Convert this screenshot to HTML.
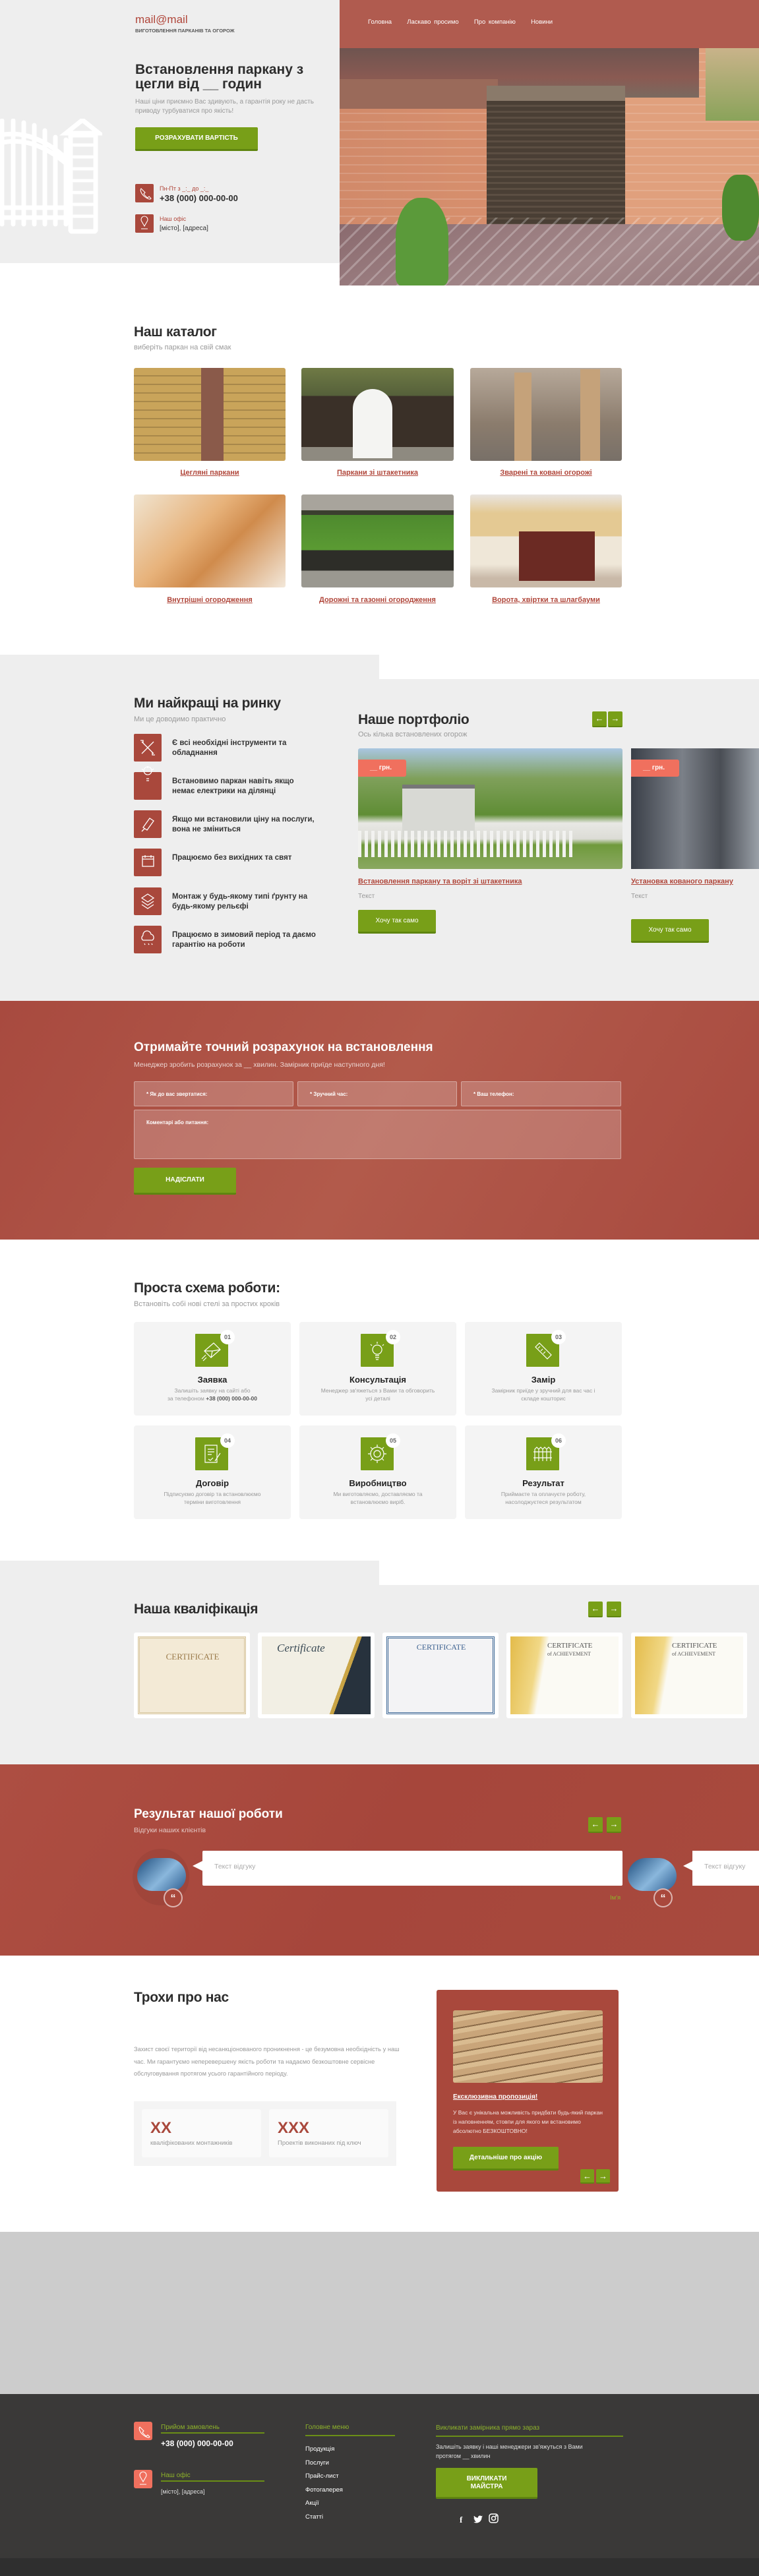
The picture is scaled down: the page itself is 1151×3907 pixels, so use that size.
<!DOCTYPE html>
<html><head><meta charset="utf-8"><style>
*{margin:0;padding:0;box-sizing:border-box}
body{width:1151px;height:3907px;position:relative;font-family:"Liberation Sans",sans-serif;background:#fff;overflow:hidden;color:#333}
.a{position:absolute}
.h2{font-size:21px;font-weight:bold;color:#2d2d2d;letter-spacing:-.3px}
.sub{font-size:11px;color:#999}
.btn{background:#789f18;color:#fff;font-weight:bold;text-align:center;border-bottom:3px solid #5f8510;border-radius:2px}
.arr{width:22px;height:24px;background:#789f18;border-radius:2px;color:#fff;font-size:13px;text-align:center;line-height:22px;border-bottom:2px solid #5f8510}
.lnk{color:#b0463a;font-weight:bold;font-size:11px;text-decoration:underline;text-align:center}
.ic{width:42px;height:42px;background:#a9483c;border-radius:2px}
.feat{font-size:11.5px;font-weight:bold;color:#333;line-height:15px}
.inp{background:rgba(255,255,255,.2);border:1px solid rgba(255,255,255,.35);border-radius:2px;color:#fff;font-size:8px;font-weight:bold;padding:14px 0 0 18px}
.card{background:#f4f4f4;border-radius:4px;text-align:center}
.card .gi{position:absolute;left:93px;top:18px;width:50px;height:50px;background:#789f18;border-radius:1px}
.card .gi svg{position:absolute;left:0;top:0}
.card .n{position:absolute;left:131px;top:12px;width:22px;height:22px;border-radius:50%;background:#fff;font-size:9px;line-height:22px;color:#666;font-weight:bold}
.card .t{position:absolute;left:0;right:0;top:80px;font-weight:bold;font-size:13px;color:#222}
.card .d{position:absolute;left:10px;right:10px;top:98px;font-size:8.5px;color:#999;line-height:12px}
.cert{background:#fff;border-radius:3px;padding:6px}
.cert div{width:100%;height:100%}
</style></head><body>

<!-- HERO -->
<div class="a" style="left:0;top:0;width:516px;height:399px;background:#eeeeee"></div>
<svg class="a" style="left:0;top:180px" width="155" height="176" viewBox="0 0 155 176">
<g fill="none" stroke="#fff" stroke-width="7" stroke-linecap="round">
<path d="M3 3V160M20 3V160M36 6V160M52 10V160M68 18V160M84 28V160M100 32V160"/>
<path d="M0 25Q50 15 100 60M0 37Q50 25 100 68"/>
<path d="M0 135H100M0 150H100"/>
<rect x="107" y="25" width="38" height="146" rx="2"/>
<path d="M100 22L125 2L150 22Z"/>
<path d="M112 40H140M112 58H140M112 76H140M112 94H140M112 112H140M112 130H140M112 148H140" stroke-width="5"/>
</g></svg>
<div class="a" style="left:205px;top:20px;font-size:17px;color:#b0463a">mail@mail</div>
<div class="a" style="left:205px;top:42px;font-size:7.5px;color:#555;font-weight:bold">ВИГОТОВЛЕННЯ ПАРКАНІВ ТА ОГОРОЖ</div>
<div class="a" style="left:205px;top:95px;width:310px;font-size:21px;font-weight:bold;color:#2d2d2d;line-height:22px">Встановлення паркану з цегли від __ годин</div>
<div class="a" style="left:205px;top:148px;width:290px;font-size:10px;color:#999;line-height:14px">Наші ціни приємно Вас здивують, а гарантія року не дасть приводу турбуватися про якість!</div>
<div class="a btn" style="left:205px;top:193px;width:186px;height:36px;font-size:10px;line-height:34px">РОЗРАХУВАТИ ВАРТІСТЬ</div>
<div class="a ic" style="left:205px;top:279px;width:28px;height:28px"></div>
<div class="a" style="left:242px;top:281px;font-size:9px;color:#b0463a">Пн-Пт з _:_ до _:_</div>
<div class="a" style="left:242px;top:293px;font-size:13px;font-weight:bold;color:#2d2d2d">+38 (000) 000-00-00</div>
<div class="a ic" style="left:205px;top:325px;width:28px;height:28px"></div>
<div class="a" style="left:242px;top:327px;font-size:9px;color:#b0463a">Наш офіс</div>
<div class="a" style="left:242px;top:341px;font-size:10px;color:#333">[місто], [адреса]</div>
<svg class="a" style="left:205px;top:279px" width="28" height="74" fill="none" stroke="#fff" stroke-width="1.1">
<path d="M9 7c-2 2 0 8 5 12s9 5 10 3l-3-3-2 2c-2-1-5-4-6-6l2-2z"/>
<path d="M14 64l-4-7a5 5 0 1 1 8 0zM9 68h10"/>
</svg>

<div class="a" style="left:515px;top:0;width:636px;height:74px;background:#b05b4f"></div>
<div class="a" style="left:558px;top:28px;font-size:9.5px;color:#fff;word-spacing:2px">Головна &nbsp;&nbsp;&nbsp; Ласкаво просимо &nbsp;&nbsp;&nbsp; Про компанію &nbsp;&nbsp;&nbsp; Новини</div>
<div class="a" style="left:515px;top:73px;width:636px;height:360px;background:linear-gradient(90deg,#d18a6a 0,#d8906e 45%,#e0a07d 45%)"></div>
<div class="a" style="left:515px;top:73px;width:636px;height:360px;background:repeating-linear-gradient(0deg,rgba(255,255,255,.14) 0 2px,transparent 2px 13px)"></div>
<div class="a" style="left:515px;top:73px;width:545px;height:75px;background:linear-gradient(180deg,#6e5450,#8a5a52 60%,#7a6a60)"></div>
<div class="a" style="left:515px;top:120px;width:240px;height:45px;background:#9a6a5a"></div>
<div class="a" style="left:1070px;top:73px;width:81px;height:110px;background:linear-gradient(180deg,#c9b38a,#8aa35a)"></div>
<div class="a" style="left:738px;top:130px;width:210px;height:25px;background:#8a7a6a"></div>
<div class="a" style="left:738px;top:153px;width:210px;height:195px;background:repeating-linear-gradient(180deg,#4a3f35 0 6px,#5b4e42 6px 9px)"></div>
<div class="a" style="left:515px;top:340px;width:636px;height:93px;background:linear-gradient(160deg,#8a6a6e,#a58a8c 60%,#96797c)"></div>
<div class="a" style="left:515px;top:330px;width:636px;height:103px;background:repeating-linear-gradient(135deg,transparent 0 14px,rgba(255,255,255,.25) 14px 17px)"></div>
<div class="a" style="left:600px;top:300px;width:80px;height:133px;border-radius:45% 45% 10% 10%;background:#5b9a3a"></div>
<div class="a" style="left:1095px;top:265px;width:56px;height:100px;border-radius:40%;background:#4e8a2f"></div>

<!-- CATALOG -->
<div class="a h2" style="left:203px;top:492px">Наш каталог</div>
<div class="a sub" style="left:203px;top:521px">виберіть паркан на свій смак</div>
<div class="a" style="left:203px;top:558px;width:230px;height:141px;border-radius:3px;background:repeating-linear-gradient(0deg,#c9a45a 0 11px,#a8884a 11px 13px),#c9a45a"></div>
<div class="a" style="left:305px;top:558px;width:34px;height:141px;background:#8a5a4a"></div>
<div class="a" style="left:457px;top:558px;width:231px;height:141px;border-radius:3px;background:linear-gradient(180deg,#6f7a45 0,#55603a 30%,#3a3028 30%,#3a3028 85%,#8e8a80 85%)"></div>
<div class="a" style="left:535px;top:590px;width:60px;height:105px;border-radius:30px 30px 0 0;background:#f4f4f2"></div>
<div class="a" style="left:713px;top:558px;width:230px;height:141px;border-radius:3px;background:linear-gradient(180deg,#b7a99a,#8b7c6d 60%,#787068)"></div>
<div class="a" style="left:780px;top:565px;width:26px;height:134px;background:#c5a27a"></div>
<div class="a" style="left:880px;top:560px;width:30px;height:139px;background:#c5a27a"></div>
<div class="a lnk" style="left:203px;top:711px;width:230px">Цегляні паркани</div>
<div class="a lnk" style="left:457px;top:711px;width:231px">Паркани зі штакетника</div>
<div class="a lnk" style="left:713px;top:711px;width:230px">Зварені та ковані огорожі</div>
<div class="a" style="left:203px;top:750px;width:230px;height:141px;border-radius:3px;background:linear-gradient(135deg,#f0e4d0 0,#e7b27a 40%,#d08b4c 60%,#f3e8da 100%)"></div>
<div class="a" style="left:457px;top:750px;width:231px;height:141px;border-radius:3px;background:linear-gradient(180deg,#a8a49c 0,#a8a49c 17%,#3b3f2f 17%,#3b3f2f 22%,#4e8a2e 22%,#5b9b33 60%,#2d2d28 60%,#2d2d28 82%,#9a9890 82%)"></div>
<div class="a" style="left:713px;top:750px;width:230px;height:141px;border-radius:3px;background:linear-gradient(180deg,#e9e5e0 0,#e4c993 20%,#e4c993 45%,#efe7d8 45%,#efe7d8 75%,#c9b9a8 90%)"></div>
<div class="a" style="left:787px;top:806px;width:115px;height:75px;background:#6b2a23"></div>
<div class="a lnk" style="left:203px;top:904px;width:230px">Внутрішні огородження</div>
<div class="a lnk" style="left:457px;top:904px;width:231px">Дорожні та газонні огородження</div>
<div class="a lnk" style="left:713px;top:904px;width:230px">Ворота, хвіртки та шлагбауми</div>

<!-- BEST / PORTFOLIO -->
<div class="a" style="left:0;top:993px;width:575px;height:40px;background:#eeeeee"></div>
<div class="a" style="left:0;top:1030px;width:1151px;height:488px;background:#eeeeee"></div>
<div class="a h2" style="left:203px;top:1055px">Ми найкращі на ринку</div>
<div class="a sub" style="left:203px;top:1085px">Ми це доводимо практично</div>
<div class="a ic" style="left:203px;top:1113px"></div>
<div class="a feat" style="left:261px;top:1120px">Є всі необхідні інструменти та<br>обладнання</div>
<div class="a ic" style="left:203px;top:1171px"></div>
<div class="a feat" style="left:261px;top:1178px">Встановимо паркан навіть якщо<br>немає електрики на ділянці</div>
<div class="a ic" style="left:203px;top:1229px"></div>
<div class="a feat" style="left:261px;top:1236px">Якщо ми встановили ціну на послуги,<br>вона не зміниться</div>
<div class="a ic" style="left:203px;top:1287px"></div>
<div class="a feat" style="left:261px;top:1294px">Працюємо без вихідних та свят</div>
<div class="a ic" style="left:203px;top:1346px"></div>
<div class="a feat" style="left:261px;top:1353px">Монтаж у будь-якому типі ґрунту на<br>будь-якому рельєфі</div>
<div class="a ic" style="left:203px;top:1404px"></div>
<div class="a feat" style="left:261px;top:1411px">Працюємо в зимовий період та даємо<br>гарантію на роботи</div>
<svg class="a" style="left:203px;top:1113px" width="42" height="340" fill="none" stroke="#fff" stroke-width="1.3">
<path d="M12 12L30 30M30 12L12 30M10 10l4 0 0 4M32 32l-4 0 0-4"/>
<path d="M21 66a6 6 0 1 1 0.1 0M19 72h4M19 75h4M21 56v-3M14 59l-2-2M28 59l2-2" transform="translate(0,-4)"/>
<path d="M14 142l10-14 6 4-10 14zM12 148l4-4"/>
<rect x="13" y="186" width="17" height="15"/><path d="M13 190h17M17 184v4M26 184v4"/>
<path d="M21 243l9 6-9 6-9-6zM12 254l9 6 9-6M12 259l9 6 9-6"/>
<path d="M14 306a6 6 0 0 1 12-2a5 5 0 0 1 2 9h-14a4 4 0 0 1 0-7M16 318l1 2M22 318l1 2M27 318l1 2"/>
</svg>

<div class="a h2" style="left:543px;top:1080px">Наше портфоліо</div>
<div class="a sub" style="left:543px;top:1108px">Ось кілька встановлених огорож</div>
<div class="a arr" style="left:898px;top:1079px">&larr;</div>
<div class="a arr" style="left:922px;top:1079px">&rarr;</div>
<div class="a" style="left:543px;top:1135px;width:401px;height:183px;border-radius:3px;background:linear-gradient(180deg,#a9c6e0 0,#7fa05a 25%,#5f8d35 55%,#e8e8e4 62%,#dcdcd6 75%,#6f9a3c 80%,#8aa860 100%)"></div>
<div class="a" style="left:610px;top:1190px;width:110px;height:80px;background:#d8d9d4;border-top:6px solid #777"></div>
<div class="a" style="left:543px;top:1260px;width:330px;height:40px;background:repeating-linear-gradient(90deg,#f2f2f0 0 5px,transparent 5px 10px)"></div>
<div class="a" style="left:543px;top:1152px;width:73px;height:26px;background:#f0705e;border-radius:0 3px 3px 0;color:#fff;font-size:10px;font-weight:bold;line-height:26px;padding-left:18px">__ грн.</div>
<div class="a lnk" style="left:543px;top:1331px;text-align:left">Встановлення паркану та воріт зі штакетника</div>
<div class="a sub" style="left:543px;top:1354px;font-size:10px">Текст</div>
<div class="a btn" style="left:543px;top:1380px;width:118px;height:36px;font-size:10px;line-height:33px;font-weight:normal">Хочу так само</div>
<div class="a" style="left:957px;top:1135px;width:194px;height:183px;background:linear-gradient(90deg,#3a3f48,#7b8088 40%,#4a4e55 70%,#9aa0a8)"></div>
<div class="a" style="left:957px;top:1152px;width:73px;height:26px;background:#f0705e;border-radius:0 3px 3px 0;color:#fff;font-size:10px;font-weight:bold;line-height:26px;padding-left:18px">__ грн.</div>
<div class="a lnk" style="left:957px;top:1331px;text-align:left">Установка кованого паркану</div>
<div class="a sub" style="left:957px;top:1354px;font-size:10px">Текст</div>
<div class="a btn" style="left:957px;top:1394px;width:118px;height:36px;font-size:10px;line-height:33px;font-weight:normal">Хочу так само</div>

<!-- FORM -->
<div class="a" style="left:0;top:1518px;width:1151px;height:362px;background:linear-gradient(120deg,#a84a3f,#b25a4b 50%,#a84a3f)"></div>
<div class="a" style="left:203px;top:1578px;font-size:19px;font-weight:bold;color:#fff">Отримайте точний розрахунок на встановлення</div>
<div class="a" style="left:203px;top:1609px;font-size:10.5px;color:rgba(255,255,255,.75)">Менеджер зробить розрахунок за __ хвилин. Замірник приїде наступного дня!</div>
<div class="a inp" style="left:203px;top:1640px;width:242px;height:38px">* Як до вас звертатися:</div>
<div class="a inp" style="left:451px;top:1640px;width:242px;height:38px">* Зручний час:</div>
<div class="a inp" style="left:699px;top:1640px;width:243px;height:38px">* Ваш телефон:</div>
<div class="a inp" style="left:203px;top:1683px;width:739px;height:75px">Коментарі або питання:</div>
<div class="a btn" style="left:203px;top:1771px;width:155px;height:41px;font-size:10px;line-height:38px">НАДІСЛАТИ</div>

<!-- STEPS -->
<div class="a h2" style="left:203px;top:1942px">Проста схема роботи:</div>
<div class="a sub" style="left:203px;top:1972px">Встановіть собі нові стелі за простих кроків</div>
<div class="a card" style="left:203px;top:2005px;width:238px;height:142px"><div class="gi"><svg width="50" height="50" fill="none" stroke="#fff" stroke-width="1.2"><path d="M14 26l14-12 10 10-14 12zM14 26l12 0 12-2M26 26l-2 10M10 38l6-6M12 41l5-5"/></svg></div><div class="n">01</div><div class="t">Заявка</div><div class="d">Залишіть заявку на сайті або<br>за телефоном <b style="color:#555">+38 (000) 000-00-00</b></div></div>
<div class="a card" style="left:454px;top:2005px;width:238px;height:142px"><div class="gi"><svg width="50" height="50" fill="none" stroke="#fff" stroke-width="1.2"><path d="M25 31a7 7 0 1 1 0.1 0M22 33h6M22 36h6M23 39h4M25 12v3M15 16l2 2M35 16l-2 2"/></svg></div><div class="n">02</div><div class="t">Консультація</div><div class="d">Менеджер зв'яжеться з Вами та обговорить<br>усі деталі</div></div>
<div class="a card" style="left:705px;top:2005px;width:238px;height:142px"><div class="gi"><svg width="50" height="50" fill="none" stroke="#fff" stroke-width="1.2"><path d="M14 20l6-6 18 18-6 6zM18 22l3-3M22 26l3-3M26 30l3-3"/></svg></div><div class="n">03</div><div class="t">Замір</div><div class="d">Замірник приїде у зручний для вас час і<br>складе кошторис</div></div>
<div class="a card" style="left:203px;top:2162px;width:238px;height:142px"><div class="gi"><svg width="50" height="50" fill="none" stroke="#fff" stroke-width="1.2"><path d="M15 12h18v26H15zM19 18h10M19 22h10M19 26h6M20 33l3 2 4-4M30 36l8-12"/></svg></div><div class="n">04</div><div class="t">Договір</div><div class="d">Підписуємо договір та встановлюємо<br>терміни виготовлення</div></div>
<div class="a card" style="left:454px;top:2162px;width:238px;height:142px"><div class="gi"><svg width="50" height="50" fill="none" stroke="#fff" stroke-width="1.2"><circle cx="25" cy="25" r="10"/><circle cx="25" cy="25" r="5"/><path d="M25 11v4M25 35v4M11 25h4M35 25h4M15 15l3 3M32 32l3 3M35 15l-3 3M15 35l3-3"/></svg></div><div class="n">05</div><div class="t">Виробництво</div><div class="d">Ми виготовляємо, доставляємо та<br>встановлюємо виріб.</div></div>
<div class="a card" style="left:705px;top:2162px;width:238px;height:142px"><div class="gi"><svg width="50" height="50" fill="none" stroke="#fff" stroke-width="1.2"><path d="M13 36V18l3-3 3 3v18M19 36V18l3-3 3 3v18M25 36V18l3-3 3 3v18M31 36V18l3-3 3 3v18M11 22h28M11 31h28"/></svg></div><div class="n">06</div><div class="t">Результат</div><div class="d">Приймаєте та оплачуєте роботу,<br>насолоджуєтеся результатом</div></div>

<!-- QUALIFICATION -->
<div class="a" style="left:0;top:2367px;width:575px;height:40px;background:#eeeeee"></div>
<div class="a" style="left:0;top:2404px;width:1151px;height:272px;background:#eeeeee"></div>
<div class="a h2" style="left:203px;top:2429px">Наша кваліфікація</div>
<div class="a arr" style="left:892px;top:2429px">&larr;</div>
<div class="a arr" style="left:920px;top:2429px">&rarr;</div>
<div class="a cert" style="left:203px;top:2476px;width:176px;height:130px"><div style="background:#f3ead6;border:3px double #d7c6a0"></div></div>
<div class="a cert" style="left:391px;top:2476px;width:177px;height:130px"><div style="background:linear-gradient(110deg,#f2efe4 70%,#c9a445 70%,#c9a445 73%,#27323d 73%)"></div></div>
<div class="a cert" style="left:580px;top:2476px;width:176px;height:130px"><div style="background:#f3f3f5;border:3px double #3f6a98"></div></div>
<div class="a cert" style="left:768px;top:2476px;width:176px;height:130px"><div style="background:linear-gradient(100deg,#e3bb4a 0,#f1d886 25%,#fbfaf4 32%)"></div></div>
<div class="a cert" style="left:957px;top:2476px;width:176px;height:130px"><div style="background:linear-gradient(100deg,#e3bb4a 0,#f1d886 25%,#fbfaf4 32%)"></div></div>
<div class="a" style="left:205px;top:2485px;width:174px;text-align:center;font-family:'Liberation Serif',serif;color:#9a7a4a;font-size:13px;padding-top:20px">CERTIFICATE</div>
<div class="a" style="left:420px;top:2490px;font-family:'Liberation Serif',serif;font-style:italic;color:#3a4a55;font-size:17px">Certificate</div>
<div class="a" style="left:582px;top:2488px;width:174px;text-align:center;font-family:'Liberation Serif',serif;color:#3a5f8e;font-size:12px;padding-top:3px">CERTIFICATE</div>
<div class="a" style="left:830px;top:2490px;font-family:'Liberation Serif',serif;color:#555;font-size:11px;line-height:12px">CERTIFICATE<br><span style="font-size:8px">of ACHIEVEMENT</span></div>
<div class="a" style="left:1019px;top:2490px;font-family:'Liberation Serif',serif;color:#555;font-size:11px;line-height:12px">CERTIFICATE<br><span style="font-size:8px">of ACHIEVEMENT</span></div>

<!-- REVIEWS -->
<div class="a" style="left:0;top:2676px;width:1151px;height:290px;background:linear-gradient(120deg,#ad4e42,#a6463b 50%,#a84a3e)"></div>
<div class="a" style="left:203px;top:2741px;font-size:19px;font-weight:bold;color:#fff">Результат нашої роботи</div>
<div class="a" style="left:203px;top:2770px;font-size:10.5px;color:rgba(255,255,255,.7)">Відгуки наших клієнтів</div>
<div class="a arr" style="left:892px;top:2756px">&larr;</div>
<div class="a arr" style="left:920px;top:2756px">&rarr;</div>
<div class="a" style="left:201px;top:2804px;width:86px;height:86px;border-radius:50%;background:rgba(0,0,0,.06)"></div>
<div class="a" style="left:208px;top:2818px;width:74px;height:50px;border-radius:37px 37px 30px 30px;background:linear-gradient(135deg,#1f4e7e,#8ab7dc 55%,#2b5c90)"></div>
<div class="a" style="left:248px;top:2864px;width:29px;height:29px;border-radius:50%;border:2px solid rgba(255,255,255,.6);background:#a9483c;color:#fff;font-size:16px;font-weight:bold;text-align:center;line-height:28px">“</div>
<div class="a" style="left:292px;top:2822px;width:0;height:0;border-top:8px solid transparent;border-bottom:8px solid transparent;border-right:16px solid #fff"></div>
<div class="a" style="left:307px;top:2807px;width:637px;height:53px;background:#fff;border-radius:2px;font-size:10.5px;color:#aaa;padding:18px 0 0 18px">Текст відгуку</div>
<div class="a" style="left:925px;top:2873px;font-size:9.5px;color:#8db22a">Ім'я</div>
<div class="a" style="left:952px;top:2818px;width:74px;height:50px;border-radius:37px 37px 30px 30px;background:linear-gradient(135deg,#1f4e7e,#8ab7dc 55%,#2b5c90)"></div>
<div class="a" style="left:991px;top:2864px;width:29px;height:29px;border-radius:50%;border:2px solid rgba(255,255,255,.6);background:#a9483c;color:#fff;font-size:16px;font-weight:bold;text-align:center;line-height:28px">“</div>
<div class="a" style="left:1036px;top:2822px;width:0;height:0;border-top:8px solid transparent;border-bottom:8px solid transparent;border-right:16px solid #fff"></div>
<div class="a" style="left:1050px;top:2807px;width:101px;height:53px;background:#fff;font-size:10.5px;color:#aaa;padding:18px 0 0 18px">Текст відгуку</div>

<!-- ABOUT -->
<div class="a h2" style="left:203px;top:3018px">Трохи про нас</div>
<div class="a" style="left:203px;top:3099px;width:420px;font-size:9.3px;color:#999;line-height:18.5px">Захист своєї території від несанкціонованого проникнення - це безумовна необхідність у наш час. Ми гарантуємо неперевершену якість роботи та надаємо безкоштовне сервісне обслуговування протягом усього гарантійного періоду.</div>
<div class="a" style="left:203px;top:3187px;width:398px;height:98px;background:#f4f4f4"></div>
<div class="a" style="left:215px;top:3199px;width:181px;height:73px;background:#fafafa;border-radius:3px"></div>
<div class="a" style="left:408px;top:3199px;width:181px;height:73px;background:#fafafa;border-radius:3px"></div>
<div class="a" style="left:228px;top:3214px;font-size:24px;font-weight:bold;color:#a9483c">XX</div>
<div class="a" style="left:228px;top:3245px;font-size:9.5px;color:#999">кваліфікованих монтажників</div>
<div class="a" style="left:421px;top:3214px;font-size:24px;font-weight:bold;color:#a9483c">XXX</div>
<div class="a" style="left:421px;top:3245px;font-size:9.5px;color:#999">Проектів виконаних під ключ</div>
<div class="a" style="left:662px;top:3018px;width:276px;height:306px;background:#a9483c;border-radius:3px"></div>
<div class="a" style="left:687px;top:3049px;width:227px;height:110px;border-radius:3px;background:repeating-linear-gradient(170deg,#c9a57a 0 9px,#8a6a48 9px 11px,#d9bb90 11px 18px)"></div>
<div class="a" style="left:687px;top:3175px;font-size:10px;font-weight:bold;color:#fff;text-decoration:underline">Ексклюзивна пропозиція!</div>
<div class="a" style="left:687px;top:3197px;width:230px;font-size:8.5px;color:rgba(255,255,255,.85);line-height:14px">У Вас є унікальна можливість придбати будь-який паркан із наповненням, стовпи для якого ми встановимо абсолютно БЕЗКОШТОВНО!</div>
<div class="a btn" style="left:687px;top:3256px;width:160px;height:36px;font-size:10px;line-height:33px">Детальніше про акцію</div>
<div class="a arr" style="left:880px;top:3290px;width:21px;height:22px">&larr;</div>
<div class="a arr" style="left:904px;top:3290px;width:21px;height:22px">&rarr;</div>

<!-- GRAY BAND -->
<div class="a" style="left:0;top:3385px;width:1151px;height:246px;background:#cccccc"></div>

<!-- FOOTER -->
<div class="a" style="left:0;top:3631px;width:1151px;height:250px;background:#3a3938"></div>
<div class="a" style="left:0;top:3880px;width:1151px;height:27px;background:#2f2f2f"></div>
<div class="a" style="left:203px;top:3673px;width:28px;height:28px;background:#f0705e;border-radius:3px"></div>
<div class="a" style="left:244px;top:3676px;font-size:10px;color:#8db22a">Прийом замовлень</div>
<div class="a" style="left:244px;top:3689px;width:157px;height:2px;background:#6a8e16"></div>
<div class="a" style="left:244px;top:3699px;font-size:12px;font-weight:bold;color:#fff">+38 (000) 000-00-00</div>
<div class="a" style="left:203px;top:3746px;width:28px;height:28px;background:#f0705e;border-radius:3px"></div>
<div class="a" style="left:244px;top:3749px;font-size:10px;color:#8db22a">Наш офіс</div>
<div class="a" style="left:244px;top:3762px;width:157px;height:2px;background:#6a8e16"></div>
<div class="a" style="left:244px;top:3774px;font-size:9px;color:#ddd">[місто], [адреса]</div>
<svg class="a" style="left:203px;top:3673px" width="28" height="101" fill="none" stroke="#fff" stroke-width="1.1">
<path d="M9 8c-2 2 0 8 5 12s9 5 10 3l-3-3-2 2c-2-1-5-4-6-6l2-2z"/>
<path d="M14 91l-4-7a5 5 0 1 1 8 0zM9 95h10"/>
</svg>
<div class="a" style="left:463px;top:3676px;font-size:10px;color:#8db22a">Головне меню</div>
<div class="a" style="left:463px;top:3693px;width:136px;height:2px;background:#6a8e16"></div>
<div class="a" style="left:463px;top:3705px;line-height:20.5px;font-size:9.5px;color:#fff">Продукція<br>Послуги<br>Прайс-лист<br>Фотогалерея<br>Акції<br>Статті</div>
<div class="a" style="left:661px;top:3677px;font-size:10px;color:#8db22a">Викликати замірника прямо зараз</div>
<div class="a" style="left:661px;top:3694px;width:284px;height:2px;background:#6a8e16"></div>
<div class="a" style="left:661px;top:3705px;width:260px;font-size:9px;color:#ddd;line-height:13.5px">Залишіть заявку і наші менеджери зв'яжуться з Вами протягом __ хвилин</div>
<div class="a btn" style="left:661px;top:3743px;width:154px;height:47px;font-size:10px;line-height:12px;padding-top:11px">ВИКЛИКАТИ<br>МАЙСТРА</div>
<div class="a" style="left:697px;top:3814px;font-size:13px;color:#fff;font-weight:bold;font-family:'Liberation Serif',serif">f</div>
<svg class="a" style="left:718px;top:3815px" width="14" height="12" viewBox="0 0 24 20"><path fill="#fff" d="M24 2.5a10 10 0 0 1-2.8.8A5 5 0 0 0 23.3.6a10 10 0 0 1-3.1 1.2A5 5 0 0 0 11.8 6 14 14 0 0 1 1.7.9a5 5 0 0 0 1.5 6.6A5 5 0 0 1 1 6.9a5 5 0 0 0 4 4.9 5 5 0 0 1-2.2.1 5 5 0 0 0 4.6 3.4A10 10 0 0 1 0 17.3 14 14 0 0 0 7.5 19.5c9 0 14-7.5 14-14v-.6A10 10 0 0 0 24 2.5z"/></svg>
<svg class="a" style="left:741px;top:3812px" width="15" height="15" fill="none" stroke="#fff" stroke-width="1.5"><rect x="1" y="1" width="13" height="13" rx="3.5"/><circle cx="7.5" cy="7.5" r="3"/><circle cx="11.3" cy="3.7" r=".6" fill="#fff"/></svg>
</body></html>
